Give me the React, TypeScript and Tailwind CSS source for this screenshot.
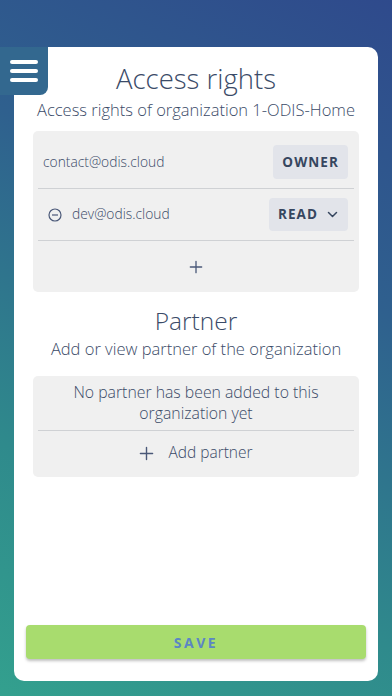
import React from 'react';

const font = { fontFamily: '"Open Sans", "Noto Sans", sans-serif' };

const Divider: React.FC = () => <div className="mx-[5px] h-px bg-[#cfd1d4]" />;

const PlusIcon: React.FC<{ size?: number }> = ({ size = 16 }) => (
  <svg width={size} height={size} viewBox="0 0 16 16" fill="none" stroke="#4a5878" strokeWidth="1.5" strokeLinecap="round">
    <path d="M8 1.5v13M1.5 8h13" />
  </svg>
);

const App: React.FC = () => {
  return (
    <div
      className="relative h-[696px] w-[392px] overflow-hidden bg-[linear-gradient(208deg,#2f4a8c_0%,#2f608e_35%,#2f8a8c_72%,#33a08e_100%)] pt-[47px]"
      style={font}
    >
      {/* menu tab */}
      <button className="absolute left-0 top-[47px] z-10 flex h-[48px] w-[48px] flex-col items-center justify-center gap-[5px] rounded-br-[8px] bg-[#33688f]">
        <span className="block h-[4px] w-[28px] rounded-full bg-white" />
        <span className="block h-[4px] w-[28px] rounded-full bg-white" />
        <span className="block h-[4px] w-[28px] rounded-full bg-white" />
      </button>

      <div className="mx-[14px] flex h-[634px] flex-col rounded-[10px] bg-white px-[19px] text-[#3b4b68]">
        <h1 className="mt-[14px] text-center text-[27.5px] font-light leading-[36px]">Access rights</h1>
        <p className="mt-[2px] text-center text-[16.5px] font-light leading-[22px]">
          Access rights of organization 1-ODIS-Home
        </p>

        <div className="mt-[10px] rounded-[5px] bg-[#f0f0f0]">
          <div className="flex h-[57px] items-center justify-between pl-[10px] pr-[11px] pt-[5px]">
            <span className="text-[13.8px] font-light">contact@odis.cloud</span>
            <span className="flex h-[34px] items-center rounded-[4px] bg-[#e2e4ea] px-[9px] text-[13.5px] font-bold tracking-[0.08em] text-[#36465f]">
              OWNER
            </span>
          </div>
          <Divider />
          <div className="flex h-[51px] items-center justify-between pl-[15px] pr-[11px]">
            <span className="flex items-center gap-[10px] text-[13.8px] font-light">
              <svg width="14" height="14" viewBox="0 0 14 14" fill="none" stroke="#4a5878" strokeWidth="1.2">
                <circle cx="7" cy="7" r="6" />
                <path d="M4 7h6" />
              </svg>
              dev@odis.cloud
            </span>
            <span className="flex h-[33px] items-center gap-[9px] rounded-[4px] bg-[#e2e4ea] pl-[9px] pr-[10px] text-[13.5px] font-bold tracking-[0.08em] text-[#36465f]">
              READ
              <svg width="11" height="7" viewBox="0 0 11 7" fill="none" stroke="#36465f" strokeWidth="1.5" strokeLinecap="round" strokeLinejoin="round">
                <path d="M1.5 1.5l4 4 4-4" />
              </svg>
            </span>
          </div>
          <Divider />
          <div className="flex h-[51px] items-center justify-center">
            <PlusIcon size={14} />
          </div>
        </div>

        <h2 className="mt-[13px] text-center text-[24.5px] font-light leading-[32px]">Partner</h2>
        <p className="mt-[1px] text-center text-[16.5px] font-light leading-[22px]">
          Add or view partner of the organization
        </p>

        <div className="mt-[16px] rounded-[5px] bg-[#f0f0f0]">
          <p className="px-[20px] pb-[6px] pt-[6px] text-center text-[15.8px] font-light leading-[21px]">
            No partner has been added to this organization yet
          </p>
          <Divider />
          <div className="flex h-[46px] items-center justify-center gap-[14px] pb-[2px]">
            <PlusIcon size={15} />
            <span className="text-[15.5px] font-light">Add partner</span>
          </div>
        </div>

        <div className="flex-1" />
        <button className="mx-[-7px] mb-[22px] h-[34px] rounded-[4px] bg-[#a8dc6e] text-[14px] font-bold tracking-[0.18em] text-[#5b86c4] shadow-[0_2px_3px_rgba(0,0,0,0.25)]">
          SAVE
        </button>
      </div>
    </div>
  );
};

export default App;
